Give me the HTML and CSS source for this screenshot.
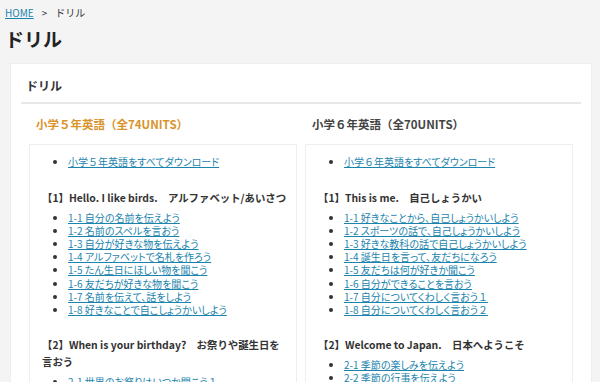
FILE: index.html
```html
<!DOCTYPE html>
<html lang="ja">
<head>
	<meta charset="UTF-8">
	<title>ドリル</title>
	<link rel="stylesheet" href="styles.css">
</head>
<body>
<div class="crumbs"><a href="#">HOME</a><span class="sep">&gt;</span>ドリル</div>
<h1 class="page_title">ドリル</h1>
<div class="card">
	<h2 class="card_title">ドリル</h2>
	<div class="cols">
		<div class="col">
			<h3 class="col_title orange">小学５年英語（全74UNITS）</h3>
			<div class="box">
				<ul class="links top">
					<li><a href="#">小学<span class="fw">５</span>年英語をすべてダウンロード</a></li>
				</ul>
				<h4 class="unit">【1】Hello. I like birds.　アルファベット/あいさつ</h4>
				<ul class="links">
					<li><a href="#">1-1 自分の名前を伝えよう</a></li>
					<li><a href="#">1-2 名前のスペルを言おう</a></li>
					<li><a href="#">1-3 自分が好きな物を伝えよう</a></li>
					<li><a href="#">1-4 アルファベットで名札を作ろう</a></li>
					<li><a href="#">1-5 たん生日にほしい物を聞こう</a></li>
					<li><a href="#">1-6 友だちが好きな物を聞こう</a></li>
					<li><a href="#">1-7 名前を伝えて、話をしよう</a></li>
					<li><a href="#">1-8 好きなことで自こしょうかいしよう</a></li>
				</ul>
				<h4 class="unit">【2】When is your birthday?　お祭りや誕生日を言おう</h4>
				<ul class="links">
					<li><a href="#">2-1 世界のお祭りはいつか聞こう<span class="fw">１</span></a></li>
					<li><a href="#">2-2 世界のお祭りはいつか聞こう<span class="fw">２</span></a></li>
				</ul>
			</div>
		</div>
		<div class="col">
			<h3 class="col_title">小学６年英語（全70UNITS）</h3>
			<div class="box">
				<ul class="links top">
					<li><a href="#">小学<span class="fw">６</span>年英語をすべてダウンロード</a></li>
				</ul>
				<h4 class="unit">【1】This is me.　自己しょうかい</h4>
				<ul class="links">
					<li><a href="#">1-1 好きなことから、自己しょうかいしよう</a></li>
					<li><a href="#">1-2 スポーツの話で、自己しょうかいしよう</a></li>
					<li><a href="#">1-3 好きな教科の話で自己しょうかいしよう</a></li>
					<li><a href="#">1-4 誕生日を言って、友だちになろう</a></li>
					<li><a href="#">1-5 友だちは何が好きか聞こう</a></li>
					<li><a href="#">1-6 自分ができることを言おう</a></li>
					<li><a href="#">1-7 自分についてくわしく言おう<span class="fw">１</span></a></li>
					<li><a href="#">1-8 自分についてくわしく言おう<span class="fw">２</span></a></li>
				</ul>
				<h4 class="unit">【2】Welcome to Japan.　日本へようこそ</h4>
				<ul class="links">
					<li><a href="#">2-1 季節の楽しみを伝えよう</a></li>
					<li><a href="#">2-2 季節の行事を伝えよう</a></li>
				</ul>
			</div>
		</div>
	</div>
</div>
</body>
</html>
```
FILE: styles.css
```css
body{margin:0;padding:0 8px 0 5px;background:#f4f4f4;color:#333;font-family:"Noto Sans CJK JP","Noto Sans",sans-serif;overflow:hidden;}
a{color:#1b84ad;}
.crumbs{font-size:10px;line-height:14px;padding-top:6px;color:#333;}
.crumbs .sep{margin:0 8px;}
.page_title{margin:6px 0 0;font-size:19px;line-height:26px;font-weight:bold;color:#222;}
.card{margin:11px 0 0 5px;background:#fff;padding:10px 10px 0;border:1px solid #eee;}
.card_title{margin:0;padding:4px 5px 8px;font-size:12px;line-height:16px;font-weight:bold;color:#333;border-bottom:2px solid #e8e8e8;}
.cols{display:grid;grid-template-columns:1fr 1fr;gap:8px;padding:0 8px;}
.col_title{margin:12px 0 0 7px;font-size:11.5px;line-height:16px;font-weight:bold;color:#444;}
.col_title.orange{color:#d9932a;}
.box{margin-top:12px;border:1px solid #eee;border-bottom:0;padding:10px 7px 0 12px;height:260px;}
.links{margin:0;padding-left:26px;font-size:10px;line-height:13px;font-feature-settings:"palt";}
.links .fw{font-feature-settings:normal;}
.links.top{margin-bottom:21px;}
.links li{margin:0;height:13.1px;}
.unit{margin:0 0 5px;font-size:10.4px;line-height:17px;font-weight:bold;color:#333;}
.links + .unit{margin-top:20px;}
```
